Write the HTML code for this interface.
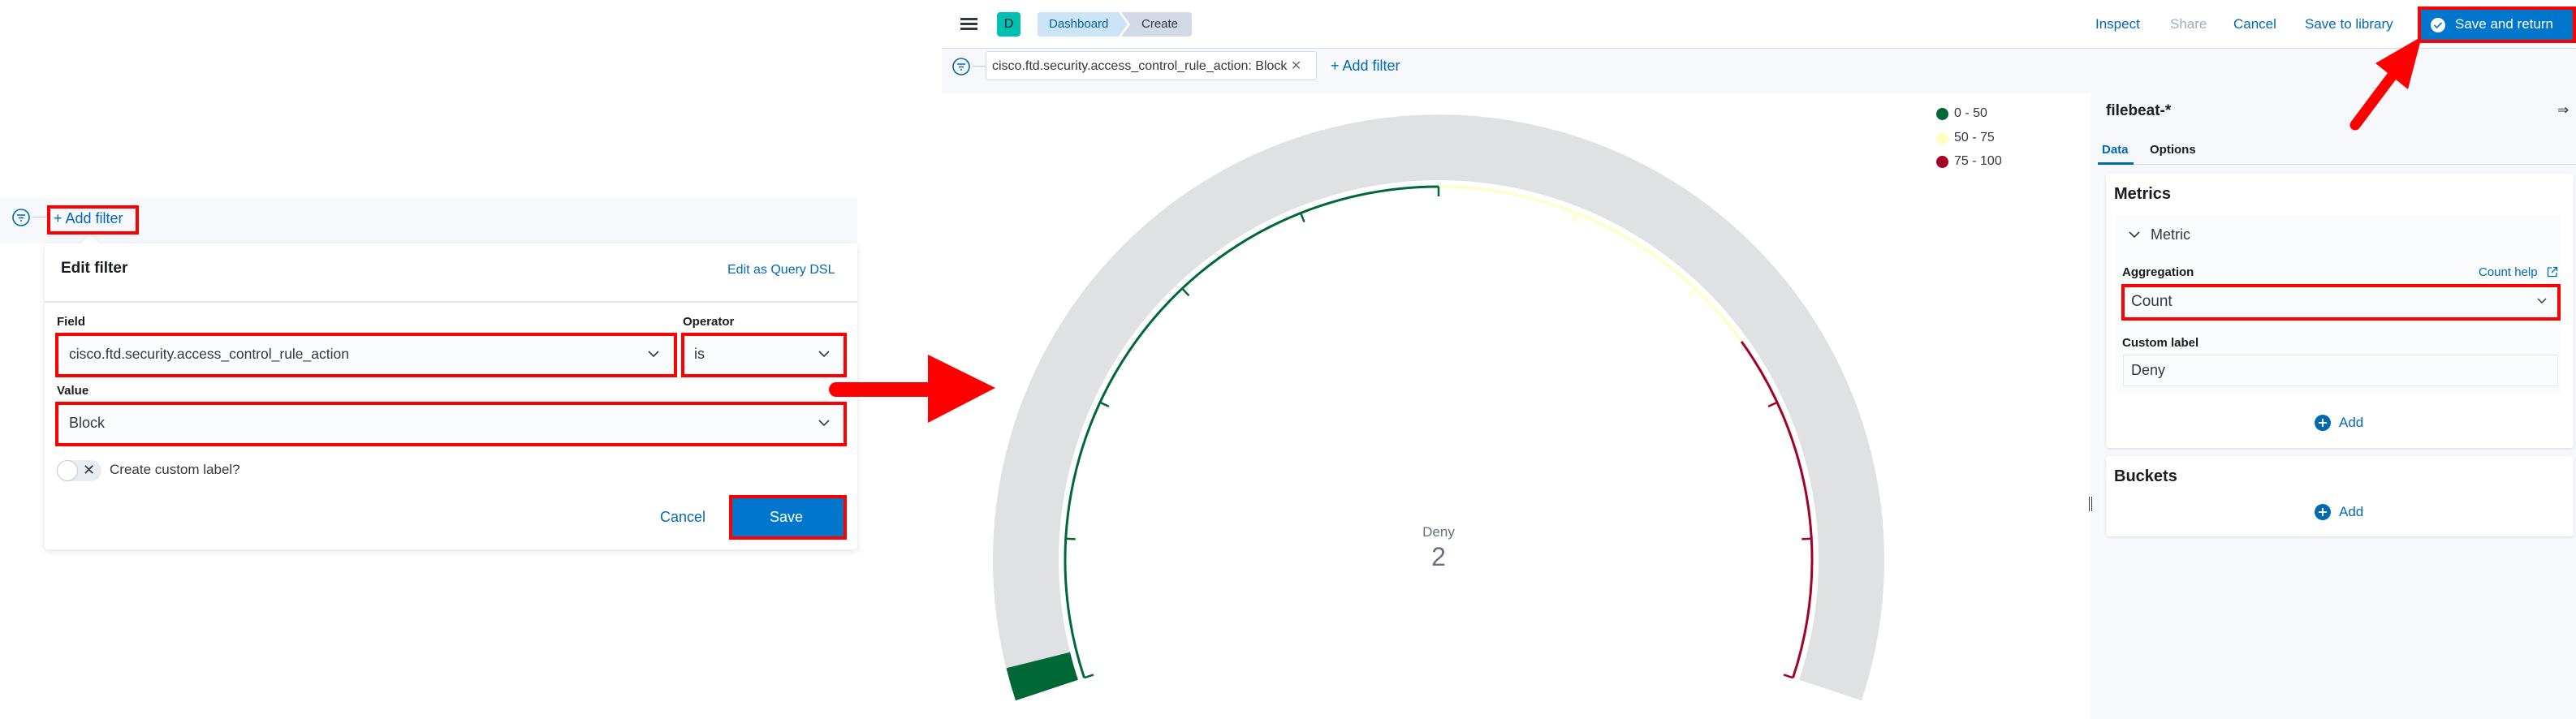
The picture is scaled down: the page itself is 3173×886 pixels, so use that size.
<!DOCTYPE html>
<html><head><meta charset="utf-8"><style>
*{box-sizing:border-box;margin:0;padding:0}
body{width:3173px;height:886px;position:relative;overflow:hidden;background:#fff;font-family:"Liberation Sans",sans-serif;color:#343741}
.a{position:absolute;white-space:nowrap}
.blue{color:#0069b4}
.red{border:4px solid #f00}
.lbl{font-weight:bold;font-size:15px;color:#1a1c21}
</style></head><body>

<!-- LEFT: filter bar -->
<div class="a" style="left:0;top:243px;width:1056px;height:57px;background:#f7f8fc"></div>
<svg class="a" style="left:14px;top:256px" width="24" height="24" viewBox="0 0 24 24"><circle cx="12" cy="12" r="10" fill="none" stroke="#0069b4" stroke-width="1.6"/><path d="M7 9h10M9 12.5h6M11 16h2" stroke="#0069b4" stroke-width="1.6"/></svg>
<div class="a" style="left:40px;top:267px;width:18px;height:1px;background:#c5cad4"></div>
<div class="a red" style="left:58px;top:253px;width:113px;height:36px"></div>
<div class="a blue" style="left:66px;top:259px;font-size:18px">+ Add filter</div>

<!-- LEFT: panel -->
<div class="a" style="left:55px;top:300px;width:1001px;height:377px;background:#fff;box-shadow:0 2px 8px rgba(0,0,0,.12);border-radius:4px"></div>
<div class="a" style="left:103px;top:292px;width:16px;height:16px;background:#fff;transform:rotate(45deg);box-shadow:-2px -2px 4px rgba(0,0,0,.05)"></div>
<div class="a" style="left:75px;top:320px;font-size:19px;font-weight:bold;color:#1a1c21">Edit filter</div>
<div class="a blue" style="left:896px;top:324px;font-size:16px">Edit as Query DSL</div>
<div class="a" style="left:55px;top:371px;width:1001px;height:2px;background:#e3e6ec"></div>
<div class="a lbl" style="left:70px;top:388px">Field</div>
<div class="a lbl" style="left:841px;top:388px">Operator</div>
<div class="a red" style="left:68px;top:410px;width:766px;height:55px;background:#fbfcfd"></div>
<div class="a" style="left:85px;top:426px;font-size:17.5px">cisco.ftd.security.access_control_rule_action</div>
<svg class="a" style="left:797px;top:430px" width="16" height="12"><path d="M2 3l6 6 6-6" fill="none" stroke="#343741" stroke-width="1.6"/></svg>
<div class="a red" style="left:839px;top:410px;width:204px;height:55px;background:#fbfcfd"></div>
<div class="a" style="left:855px;top:426px;font-size:18px">is</div>
<svg class="a" style="left:1007px;top:430px" width="16" height="12"><path d="M2 3l6 6 6-6" fill="none" stroke="#343741" stroke-width="1.6"/></svg>
<div class="a lbl" style="left:70px;top:473px">Value</div>
<div class="a red" style="left:68px;top:495px;width:975px;height:55px;background:#fbfcfd"></div>
<div class="a" style="left:85px;top:511px;font-size:18px">Block</div>
<svg class="a" style="left:1007px;top:515px" width="16" height="12"><path d="M2 3l6 6 6-6" fill="none" stroke="#343741" stroke-width="1.6"/></svg>
<div class="a" style="left:70px;top:567px;width:55px;height:26px;border-radius:13px;background:#e9edf3"></div>
<div class="a" style="left:70px;top:567px;width:26px;height:26px;border-radius:13px;background:#fff;border:1px solid #c5cad4"></div>
<div class="a" style="left:102px;top:569px;font-size:18px;color:#343741">✕</div>
<div class="a" style="left:135px;top:569px;font-size:17px">Create custom label?</div>
<div class="a blue" style="left:813px;top:627px;font-size:18px">Cancel</div>
<div class="a red" style="left:898px;top:610px;width:145px;height:55px;background:#0077cc"></div>
<div class="a" style="left:948px;top:627px;font-size:18px;color:#fff">Save</div>

<!-- MIDDLE header -->
<div class="a" style="left:1160px;top:59px;width:2013px;height:1px;background:#d3dae6"></div>
<div class="a" style="left:1160px;top:60px;width:1415px;height:55px;background:#f7f8fc"></div>
<div class="a" style="left:2575px;top:60px;width:598px;height:826px;background:#f7f8fc"></div>
<div class="a" style="left:1183px;top:22px;width:21px;height:3px;background:#343741;box-shadow:0 6px 0 #343741,0 12px 0 #343741"></div>
<div class="a" style="left:1228px;top:15px;width:29px;height:30px;border-radius:4px;background:#00bfb3;color:#1a1c21;font-size:16px;text-align:center;line-height:30px">D</div>
<svg class="a" style="left:1278px;top:15px" width="192" height="30"><path d="M4 0H100L111 15L100 30H4Q0 30 0 26V4Q0 0 4 0Z" fill="#cce4f5"/><path d="M103 0H186Q190 0 190 4V26Q190 30 186 30H103L114 15Z" fill="#d3dae6"/></svg>
<div class="a" style="left:1292px;top:21px;font-size:15px;color:#0061a6">Dashboard</div>
<div class="a" style="left:1406px;top:21px;font-size:15px;color:#343741">Create</div>
<div class="a blue" style="left:2581px;top:20px;font-size:17px">Inspect</div>
<div class="a" style="left:2673px;top:20px;font-size:17px;color:#a2abba">Share</div>
<div class="a blue" style="left:2751px;top:20px;font-size:17px">Cancel</div>
<div class="a blue" style="left:2839px;top:20px;font-size:17px">Save to library</div>
<div class="a red" style="left:2978px;top:8px;width:195px;height:45px;background:#0077cc"></div>
<svg class="a" style="left:2993px;top:21px" width="20" height="20"><circle cx="10" cy="10" r="9" fill="#fff"/><path d="M5.5 10l3 3 6-6" fill="none" stroke="#0077cc" stroke-width="1.6"/></svg>
<div class="a" style="left:3024px;top:20px;font-size:17px;color:#fff">Save and return</div>

<!-- middle filter bar -->
<svg class="a" style="left:1172px;top:70px" width="24" height="24" viewBox="0 0 24 24"><circle cx="12" cy="12" r="10" fill="none" stroke="#0069b4" stroke-width="1.6"/><path d="M7 9h10M9 12.5h6M11 16h2" stroke="#0069b4" stroke-width="1.6"/></svg>
<div class="a" style="left:1198px;top:81px;width:16px;height:1px;background:#c5cad4"></div>
<div class="a" style="left:1214px;top:63px;width:408px;height:36px;background:#fff;border:1px solid #d3dae6;border-radius:3px"></div>
<div class="a" style="left:1222px;top:71px;font-size:16px;color:#343741">cisco.ftd.security.access_control_rule_action: Block <span style="color:#69707d">✕</span></div>
<div class="a blue" style="left:1639px;top:71px;font-size:18px">+ Add filter</div>

<!-- legend -->
<div class="a" style="left:2385px;top:133px;width:15px;height:15px;border-radius:50%;background:#006837"></div>
<div class="a" style="left:2385px;top:163px;width:15px;height:15px;border-radius:50%;background:#ffffbf"></div>
<div class="a" style="left:2385px;top:192px;width:15px;height:15px;border-radius:50%;background:#a50026"></div>
<div class="a" style="left:2407px;top:131px;font-size:16px">0 - 50</div>
<div class="a" style="left:2407px;top:161px;font-size:16px">50 - 75</div>
<div class="a" style="left:2407px;top:190px;font-size:16px">75 - 100</div>

<!-- gauge text -->
<div class="a" style="left:1722px;top:646px;width:100px;text-align:center;font-size:17px;color:#69707d">Deny</div>
<div class="a" style="left:1722px;top:668px;width:100px;text-align:center;font-size:32px;color:#69707d">2</div>

<!-- right panel -->
<div class="a" style="left:2594px;top:126px;font-size:19px;font-weight:bold;color:#1a1c21">filebeat-*</div>
<div class="a" style="left:3150px;top:126px;font-size:17px;color:#343741">⇒</div>
<div class="a blue" style="left:2589px;top:176px;font-size:15px;font-weight:bold">Data</div>
<div class="a" style="left:2648px;top:176px;font-size:15px;font-weight:bold;color:#1a1c21">Options</div>
<div class="a" style="left:2584px;top:202px;width:589px;height:1px;background:#d3dae6"></div>
<div class="a" style="left:2584px;top:200px;width:44px;height:3px;background:#0069b4"></div>

<div class="a" style="left:2594px;top:214px;width:576px;height:338px;background:#fff;border-radius:4px;box-shadow:0 1px 3px rgba(0,0,0,.12)"></div>
<div class="a" style="left:2604px;top:228px;font-size:20px;font-weight:bold;color:#1a1c21">Metrics</div>
<div class="a" style="left:2606px;top:265px;width:549px;height:220px;background:#fbfcfd"></div>
<svg class="a" style="left:2621px;top:283px" width="16" height="12"><path d="M2 3l6 6 6-6" fill="none" stroke="#343741" stroke-width="1.6"/></svg>
<div class="a" style="left:2649px;top:279px;font-size:18px">Metric</div>
<div class="a lbl" style="left:2614px;top:327px">Aggregation</div>
<div class="a blue" style="left:3053px;top:327px;font-size:15px">Count help</div>
<svg class="a" style="left:3137px;top:328px" width="14" height="14"><path d="M6 2H1.5V12.5H12V8M8 1.5h4.5V6M12.5 1.5L6 8" fill="none" stroke="#0069b4" stroke-width="1.3"/></svg>
<div class="a red" style="left:2613px;top:350px;width:541px;height:45px;background:#fbfcfd"></div>
<div class="a" style="left:2625px;top:361px;font-size:19px">Count</div>
<svg class="a" style="left:3124px;top:366px" width="14" height="10"><path d="M2 2l5 5 5-5" fill="none" stroke="#343741" stroke-width="1.4"/></svg>
<div class="a lbl" style="left:2614px;top:414px">Custom label</div>
<div class="a" style="left:2615px;top:437px;width:536px;height:39px;background:#fbfcfd;border:1px solid #e6e9ef;border-radius:2px"></div>
<div class="a" style="left:2625px;top:446px;font-size:18px">Deny</div>
<svg class="a" style="left:2851px;top:511px" width="20" height="20"><circle cx="10" cy="10" r="10" fill="#0069b4"/><path d="M10 5v10M5 10h10" stroke="#fff" stroke-width="2"/></svg>
<div class="a blue" style="left:2881px;top:511px;font-size:17px">Add</div>

<div class="a" style="left:2594px;top:562px;width:576px;height:99px;background:#fff;border-radius:4px;box-shadow:0 1px 3px rgba(0,0,0,.12)"></div>
<div class="a" style="left:2604px;top:576px;font-size:20px;font-weight:bold;color:#1a1c21">Buckets</div>
<svg class="a" style="left:2851px;top:621px" width="20" height="20"><circle cx="10" cy="10" r="10" fill="#0069b4"/><path d="M10 5v10M5 10h10" stroke="#fff" stroke-width="2"/></svg>
<div class="a blue" style="left:2881px;top:621px;font-size:17px">Add</div>
<div class="a" style="left:2573px;top:612px;width:1px;height:18px;background:#343741;box-shadow:3px 0 0 #343741"></div>

<!-- gauge + arrows -->
<svg class="a" style="left:0;top:0" width="3173" height="886">
<path d="M1251,863.3 A549,549 0 1 1 2293,863.3 L2216.1,837.7 A468,468 0 1 0 1327.9,837.7 Z" fill="#e0e1e3"/>
<path d="M1251,863.3 A549,549 0 0 1 1239.5,823.4 L1318,803.7 A468,468 0 0 0 1327.9,837.7 Z" fill="#006837"/>
<g fill="none" stroke-width="3">
<path d="M1335.5,835.2 A460,460 0 0 1 1772,230" stroke="#006837"/>
<path d="M1772,230 A460,460 0 0 1 2145.1,420.9" stroke="#ffffbf"/>
<path d="M2145.1,420.9 A460,460 0 0 1 2208.5,835.2" stroke="#a50026"/>
</g>
<g stroke-width="2.5">
<g stroke="#006837"><path d="M1335.5,835.2L1346.9,831.4M1312.8,663.7L1324.7,664.4M1355,495.9L1365.9,500.9M1456.2,355.5L1464.4,364.3M1602.1,262.5L1606.5,273.6M1772,230L1772,242"/></g>
<g stroke="#ffffbf"><path d="M1941.9,262.5L1937.5,273.6M2087.8,355.5L2079.6,364.3"/></g>
<g stroke="#a50026"><path d="M2189,495.9L2178.1,500.9M2231.2,663.7L2219.3,664.4M2208.5,835.2L2197.1,831.4"/></g>
</g>
<line x1="1030" y1="480" x2="1150" y2="480" stroke="#f00" stroke-width="18" stroke-linecap="round"/>
<path d="M1143,437 L1226,478 L1143,521 Z" fill="#f00"/>
<line x1="2901" y1="154" x2="2952" y2="86" stroke="#f00" stroke-width="13" stroke-linecap="round"/>
<path d="M2983,45 L2926,78 L2966,110 Z" fill="#f00"/>
</svg>
</body></html>
